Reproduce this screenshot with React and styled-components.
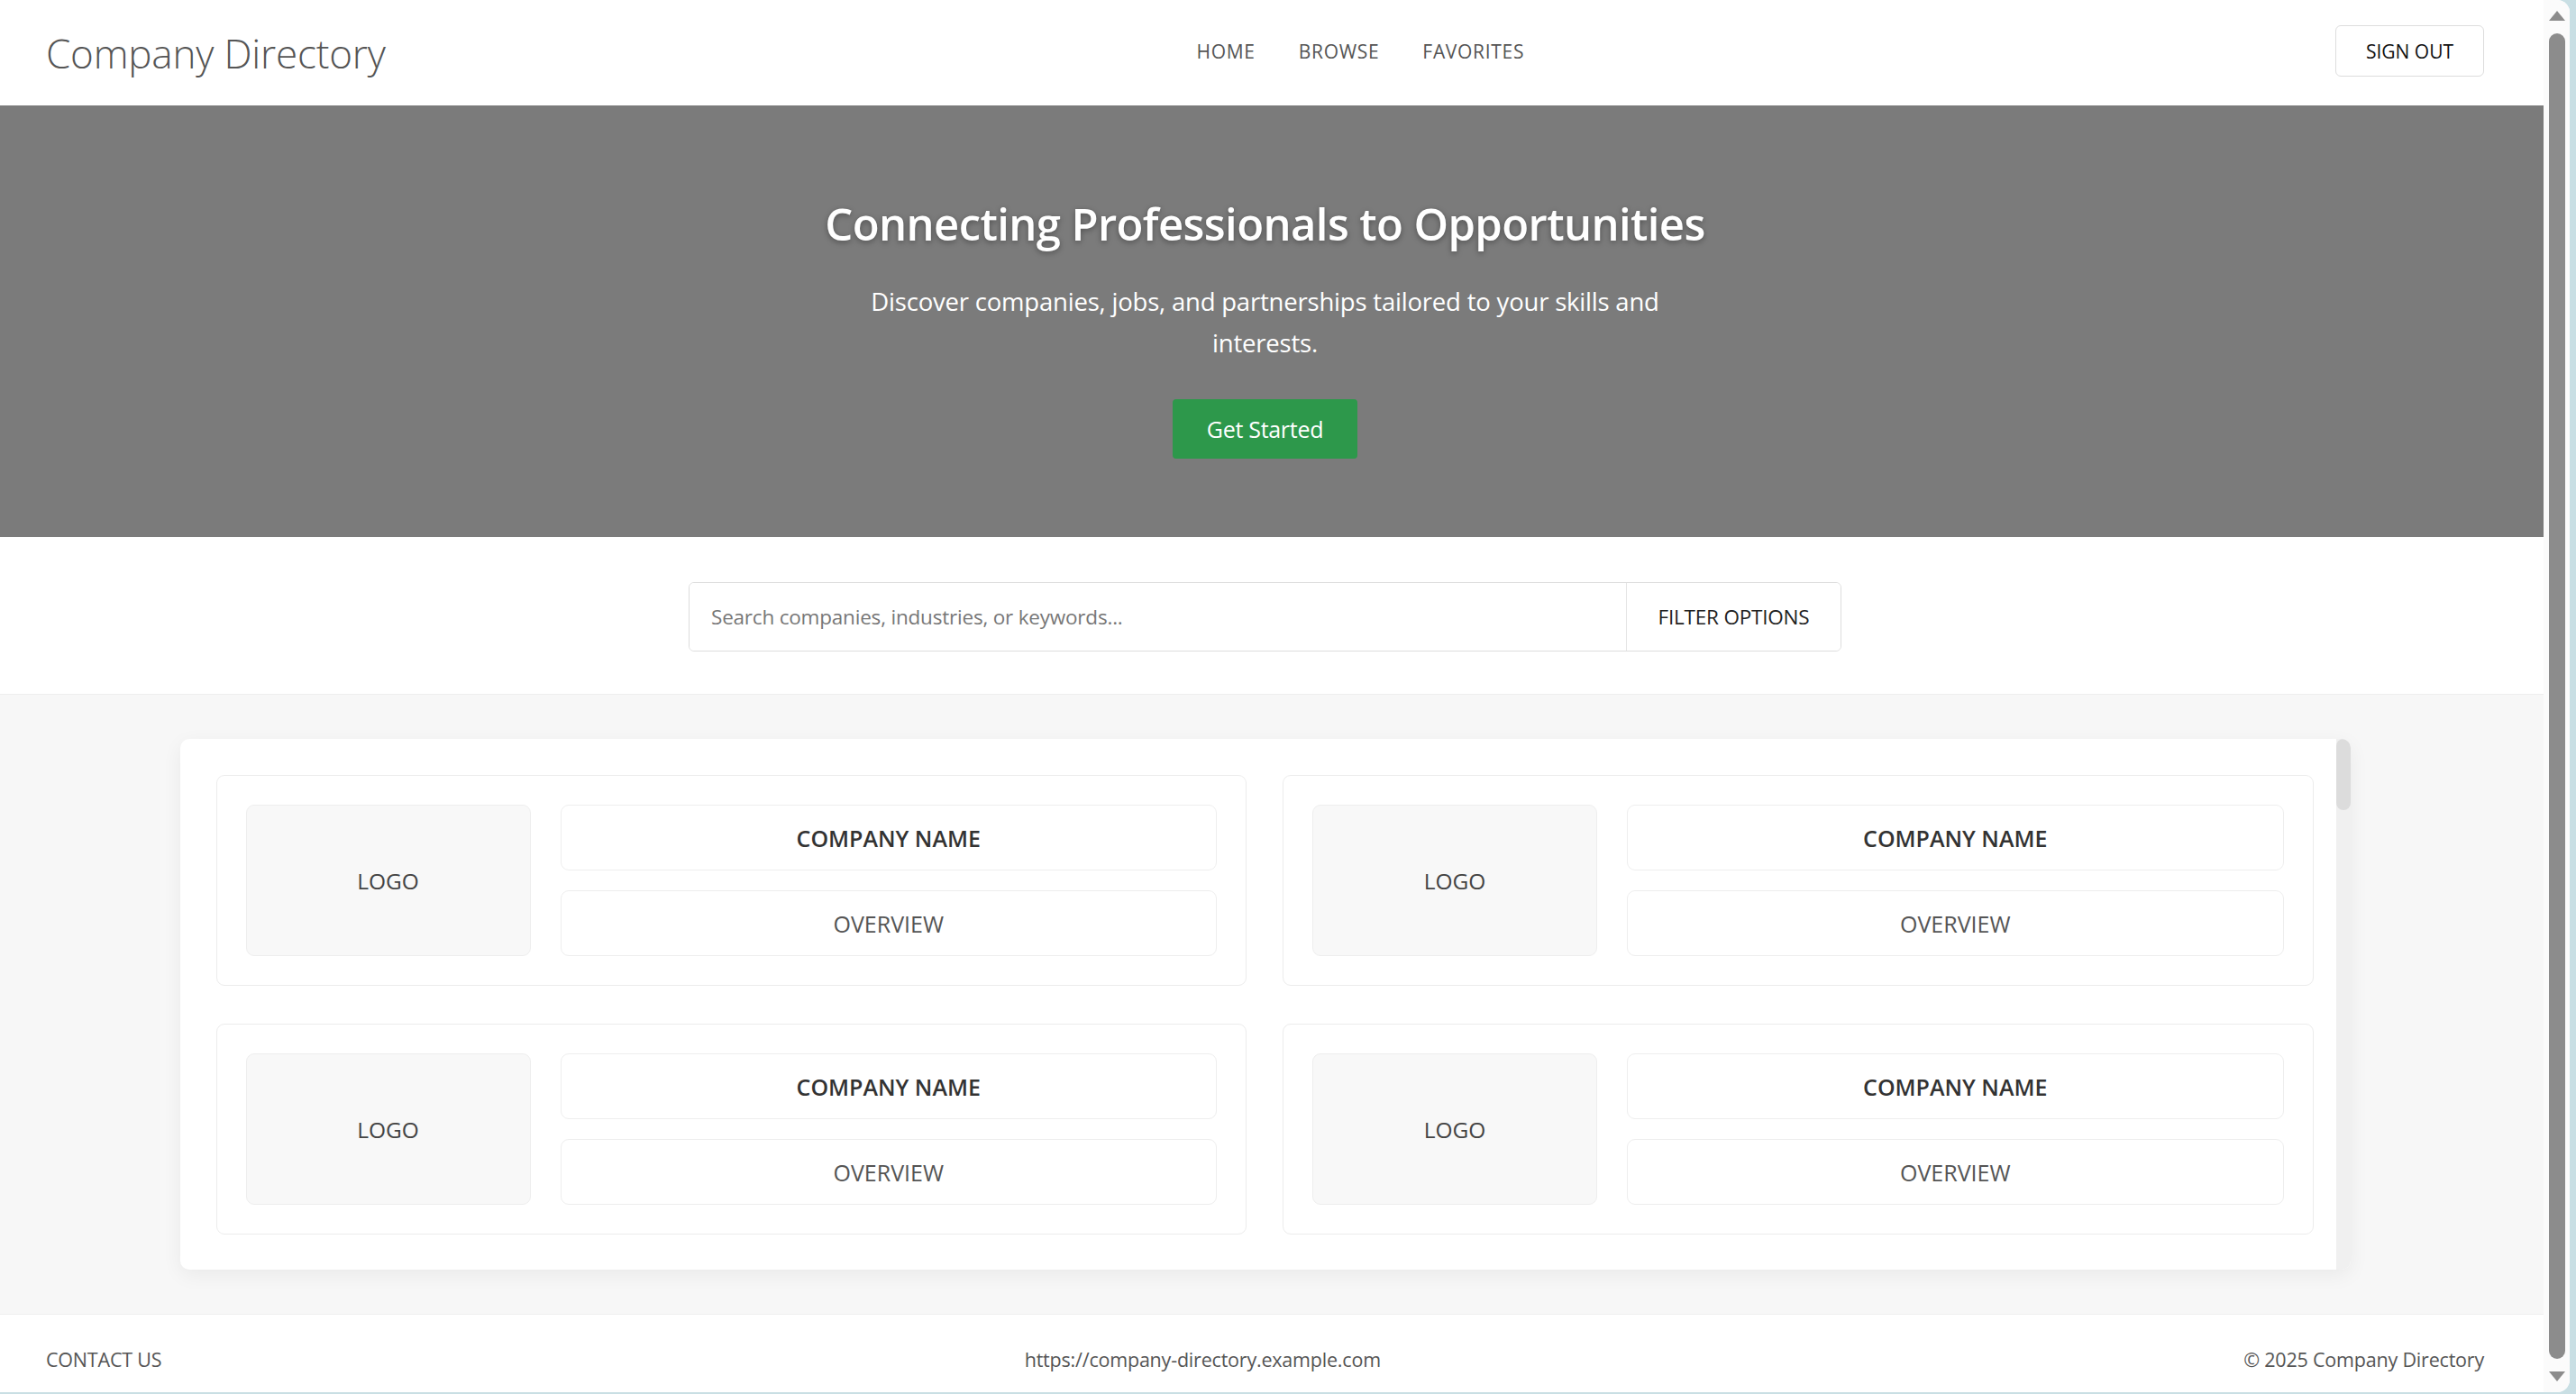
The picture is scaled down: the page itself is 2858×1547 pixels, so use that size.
import styled, { createGlobalStyle } from "styled-components";

const GlobalStyle = createGlobalStyle`
  html, body {
    margin: 0;
    padding: 0;
    height: 100%;
    overflow: hidden;
  }
  body {
    font-family: "Open Sans", "Noto Sans", "Liberation Sans", sans-serif;
    color: #333;
  }
  * {
    box-sizing: border-box;
  }
`;

const NAV_ITEMS = ["HOME", "BROWSE", "FAVORITES"];
const COMPANIES = [1, 2, 3, 4];

function App() {
  return (
    <Window>
      <GlobalStyle />
      <Viewport>
        <Page>
          <Header>
            <Brand>Company Directory</Brand>
            <Nav>
              {NAV_ITEMS.map((item) => (
                <NavLink key={item}>{item}</NavLink>
              ))}
            </Nav>
            <OutlineButton>SIGN OUT</OutlineButton>
          </Header>

          <Hero>
            <HeroInner>
              <h1>Connecting Professionals to Opportunities</h1>
              <p>
                Discover companies, jobs, and partnerships tailored to your
                skills and interests.
              </p>
              <PrimaryButton>Get Started</PrimaryButton>
            </HeroInner>
          </Hero>

          <SearchSection>
            <SearchBox>
              <input placeholder="Search companies, industries, or keywords..." />
              <FilterButton>FILTER OPTIONS</FilterButton>
            </SearchBox>
          </SearchSection>

          <Main>
            <ListPanel>
              <CardGrid>
                {COMPANIES.map((id) => (
                  <CompanyCard key={id}>
                    <LogoBox>LOGO</LogoBox>
                    <InfoCol>
                      <InfoBox $strong>COMPANY NAME</InfoBox>
                      <InfoBox>OVERVIEW</InfoBox>
                    </InfoCol>
                  </CompanyCard>
                ))}
              </CardGrid>
              <PanelTrack>
                <PanelThumb />
              </PanelTrack>
            </ListPanel>
          </Main>

          <Footer>
            <span>CONTACT US</span>
            <span>https://company-directory.example.com</span>
            <span>© 2025 Company Directory</span>
          </Footer>
        </Page>

        <ScrollRail>
          <RailArrow $dir="up" />
          <RailThumb />
          <RailArrow $dir="down" />
        </ScrollRail>
      </Viewport>
    </Window>
  );
}

const Window = styled.div`
  height: 100vh;
  display: flex;
  flex-direction: column;
  background: #c9dfe4;
  padding: 0 7px 2px 0;
`;

const Viewport = styled.div`
  flex: 1;
  display: flex;
  min-height: 0;
  background: #fff;
  border-radius: 0 14px 14px 0;
  overflow: hidden;
`;

const Page = styled.div`
  flex: 1;
  min-width: 0;
  display: flex;
  flex-direction: column;
`;

const Header = styled.header`
  height: 117px;
  flex-shrink: 0;
  display: flex;
  align-items: center;
  justify-content: space-between;
  padding: 0 66px 0 51px;
  background: #fff;
`;

const Brand = styled.div`
  font-size: 44px;
  font-weight: 300;
  color: #555;
  letter-spacing: -0.2px;
`;

const Nav = styled.nav`
  display: flex;
  gap: 48px;
  margin-top: -4px;
`;

const NavLink = styled.a`
  font-size: 21px;
  letter-spacing: 0.7px;
  color: #555;
  cursor: pointer;
`;

const OutlineButton = styled.button`
  width: 165px;
  height: 57px;
  border: 1px solid #ddd;
  border-radius: 6px;
  background: #fff;
  font-family: inherit;
  font-size: 21px;
  color: #111;
  margin-top: -4px;
`;

const Hero = styled.section`
  height: 479px;
  flex-shrink: 0;
  background: #7b7b7b;
  padding-right: 15px;
`;

const HeroInner = styled.div`
  display: flex;
  flex-direction: column;
  align-items: center;
  text-align: center;
  color: #fff;

  h1 {
    margin: 100px 0 0;
    font-size: 49px;
    line-height: 62px;
    font-weight: 600;
    letter-spacing: -0.6px;
    text-shadow: 0 2px 6px rgba(0, 0, 0, 0.35);
  }

  p {
    margin: 33px 0 0;
    max-width: 980px;
    font-size: 27.5px;
    line-height: 46px;
    letter-spacing: -0.2px;
  }
`;

const PrimaryButton = styled.button`
  margin-top: 39px;
  width: 205px;
  height: 66px;
  border: none;
  border-radius: 4px;
  background: #2d984b;
  color: #fff;
  font-family: inherit;
  font-size: 25px;
  letter-spacing: -0.3px;
`;

const SearchSection = styled.section`
  height: 175px;
  flex-shrink: 0;
  display: flex;
  align-items: center;
  justify-content: center;
  padding-right: 15px;
  background: #fff;
  border-bottom: 1px solid #eee;
`;

const SearchBox = styled.div`
  width: 1279px;
  height: 77px;
  display: flex;
  border: 1px solid #ddd;
  border-radius: 6px;
  overflow: hidden;
  margin-top: 2px;

  input {
    flex: 1;
    border: none;
    outline: none;
    padding: 0 24px;
    font-family: inherit;
    font-size: 22.5px;
    letter-spacing: -0.2px;
    color: #333;
    &::placeholder {
      color: #777;
    }
  }
`;

const FilterButton = styled.button`
  width: 238px;
  border: none;
  border-left: 1px solid #e4e4e4;
  background: #fff;
  font-family: inherit;
  font-size: 22.5px;
  letter-spacing: -0.2px;
  color: #222;
`;

const Main = styled.main`
  flex: 1;
  min-height: 0;
  display: flex;
  align-items: center;
  justify-content: center;
  padding-right: 15px;
  background: #f7f7f7;
`;

const ListPanel = styled.div`
  width: 2408px;
  height: 589px;
  display: flex;
  background: #fff;
  border-radius: 10px;
  overflow: hidden;
  box-shadow: 0 6px 22px rgba(0, 0, 0, 0.06);
`;

const CardGrid = styled.div`
  flex: 1;
  display: grid;
  grid-template-columns: 1fr 1fr;
  align-content: start;
  gap: 42px 40px;
  padding: 40px 25px 40px 40px;
`;

const PanelTrack = styled.div`
  width: 16px;
  flex-shrink: 0;
  background: #f0f0f0;
`;

const PanelThumb = styled.div`
  height: 79px;
  background: #dcdcdc;
  border-radius: 8px;
`;

const CompanyCard = styled.div`
  display: grid;
  grid-template-columns: 316px 1fr;
  gap: 33px;
  padding: 32px;
  border: 1px solid #ececec;
  border-radius: 9px;
  background: #fff;
`;

const LogoBox = styled.div`
  height: 168px;
  display: flex;
  align-items: center;
  justify-content: center;
  background: #f8f8f8;
  border: 1px solid #eee;
  border-radius: 9px;
  font-size: 24.5px;
  font-weight: 500;
  color: #444;
`;

const InfoCol = styled.div`
  display: flex;
  flex-direction: column;
  gap: 22px;
`;

const InfoBox = styled.div`
  height: 73px;
  display: flex;
  align-items: center;
  justify-content: center;
  border: 1px solid #eee;
  border-radius: 9px;
  font-size: 25px;
  font-weight: ${(p) => (p.$strong ? 600 : 400)};
  color: ${(p) => (p.$strong ? "#333" : "#555")};
`;

const Footer = styled.footer`
  height: 87px;
  flex-shrink: 0;
  display: flex;
  align-items: center;
  justify-content: space-between;
  padding: 13px 66px 0 51px;
  background: #fff;
  border-top: 1px solid #eee;
  font-size: 21.5px;
  letter-spacing: -0.2px;
  color: #555;
`;

const ScrollRail = styled.aside`
  width: 29px;
  flex-shrink: 0;
  display: flex;
  flex-direction: column;
  align-items: center;
  padding: 12px 0 12px;
  gap: 14px;
  background: #fbfbfb;
`;

const RailArrow = styled.div`
  width: 0;
  height: 0;
  border-left: 9px solid transparent;
  border-right: 9px solid transparent;
  ${(p) =>
    p.$dir === "up"
      ? "border-bottom: 11px solid #8c8c8c;"
      : "border-top: 11px solid #8c8c8c;"}
`;

const RailThumb = styled.div`
  flex: 1;
  width: 18px;
  background: #8c8c8c;
  border-radius: 9px;
`;

export default App;
